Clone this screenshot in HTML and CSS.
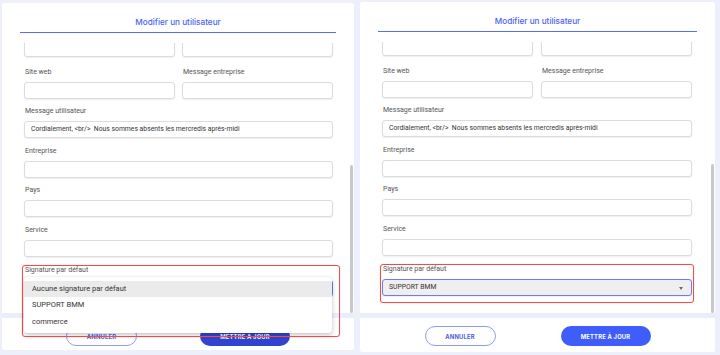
FILE: index.html
```html
<!DOCTYPE html>
<html lang="fr">
<head>
<meta charset="utf-8">
<title>Modifier un utilisateur</title>
<link rel="stylesheet" href="styles.css">
</head>
<body>
<div class="page">
  <section class="panel panel-left">
    <header class="panel-head"><div class="head-inner"><h2 class="title">Modifier un utilisateur</h2></div></header>
    <div class="panel-body">
      <div class="form">
        <div class="row two first">
          <div class="field"><div class="input"></div></div>
          <div class="field"><div class="input"></div></div>
        </div>
        <div class="row two">
          <div class="field"><label class="label">Site web</label><div class="input"></div></div>
          <div class="field"><label class="label">Message entreprise</label><div class="input"></div></div>
        </div>
        <div class="field"><label class="label">Message utilisateur</label><div class="input">Cordialement, &lt;br/&gt;&nbsp; Nous sommes absents les mercredis après-midi</div></div>
        <div class="field"><label class="label">Entreprise</label><div class="input"></div></div>
        <div class="field"><label class="label">Pays</label><div class="input"></div></div>
        <div class="field"><label class="label">Service</label><div class="input"></div></div>
        <div class="field sig">
          <label class="label">Signature par défaut</label>
          <div class="input select focused"></div>
          <ul class="menu">
            <li class="option active">Aucune signature par défaut</li>
            <li class="option">SUPPORT BMM</li>
            <li class="option">commerce</li>
          </ul>
          <span class="highlight hl-left"></span>
        </div>
      </div>
      <div class="scrollbar"></div>
    </div>
    <footer class="panel-foot foot-left">
      <button class="btn btn-outline">ANNULER</button>
      <button class="btn btn-primary dark">METTRE À JOUR</button>
    </footer>
  </section>

  <section class="panel panel-right">
    <header class="panel-head"><div class="head-inner"><h2 class="title">Modifier un utilisateur</h2></div></header>
    <div class="panel-body">
      <div class="form">
        <div class="row two first">
          <div class="field"><div class="input"></div></div>
          <div class="field"><div class="input"></div></div>
        </div>
        <div class="row two">
          <div class="field"><label class="label">Site web</label><div class="input"></div></div>
          <div class="field"><label class="label">Message entreprise</label><div class="input"></div></div>
        </div>
        <div class="field"><label class="label">Message utilisateur</label><div class="input">Cordialement, &lt;br/&gt;&nbsp; Nous sommes absents les mercredis après-midi</div></div>
        <div class="field"><label class="label">Entreprise</label><div class="input"></div></div>
        <div class="field"><label class="label">Pays</label><div class="input"></div></div>
        <div class="field"><label class="label">Service</label><div class="input"></div></div>
        <div class="field sig">
          <label class="label">Signature par défaut</label>
          <div class="input select focused filled">SUPPORT BMM<span class="caret"></span></div>
          <span class="highlight hl-right"></span>
        </div>
      </div>
      <div class="scrollbar"></div>
    </div>
    <footer class="panel-foot foot-right">
      <button class="btn btn-outline">ANNULER</button>
      <button class="btn btn-primary">METTRE À JOUR</button>
    </footer>
  </section>
</div>
</body>
</html>
```

FILE: styles.css
```css
* { box-sizing: border-box; margin: 0; padding: 0; }

html, body {
  width: 720px;
  height: 355px;
  overflow: hidden;
}

body {
  background: #edf0fb;
  font-family: Roboto, "Liberation Sans", sans-serif;
  color: #333;
}

.page {
  display: flex;
  align-items: flex-start;
  gap: 6px;
  padding-left: 2px;
}

.panel {
  background: #fff;
  border-radius: 3px;
  display: flex;
  flex-direction: column;
  position: relative;
}

.panel-left { width: 352px; height: 347px; margin-top: 3px; }
.panel-right { width: 355px; height: 350px; margin-top: 2px; }

.panel-head {
  position: relative;
  z-index: 4;
  background: #fff;
  border-radius: 3px 3px 0 0;
  padding: 12px 18px 10px;
}

.head-inner {
  border-bottom: 1.5px solid #5a6cf8;
  padding-bottom: 3px;
}

.title {
  font-family: Inter, "Noto Sans", sans-serif;
  font-weight: 500;
  font-size: 8.2px;
  line-height: 14px;
  text-align: center;
  color: #4d5ff2;
}

.panel-body {
  flex: 1;
  position: relative;
  z-index: 3;
}

.form {
  display: flex;
  flex-direction: column;
  gap: 7.6px;
  padding: 0 22px;
  margin-top: -3px;
}

.row.first { margin-bottom: 2px; }

.panel-left .form { padding-right: 21px; }
.panel-right .form { padding-right: 23px; }

.row.two {
  display: grid;
  grid-template-columns: 1fr 1fr;
  gap: 7px;
}
.panel-right .row.two { gap: 8px; }

.field {
  display: flex;
  flex-direction: column;
  position: relative;
}

.label {
  font-size: 7px;
  line-height: 10px;
  color: #555;
  margin-bottom: 5px;
  padding-left: 1px;
}

.input {
  height: 17px;
  border: 1px solid #dcdcdc;
  border-radius: 3px;
  box-shadow: 0 1px 1.5px rgba(0, 0, 0, 0.07);
  background: #fff;
  font-size: 6.8px;
  line-height: 15px;
  padding-left: 6px;
  color: #333;
  white-space: nowrap;
}

.select.focused {
  border-color: #6b7cf6;
  background: #efefef;
  position: relative;
}

.caret {
  position: absolute;
  right: 8px;
  top: 7px;
  width: 0;
  height: 0;
  border-left: 2.5px solid transparent;
  border-right: 2.5px solid transparent;
  border-top: 3px solid #6b6b6b;
}

.highlight {
  position: absolute;
  top: 0;
  border: 1.5px solid #ef4b4b;
  border-radius: 3px;
  pointer-events: none;
  box-shadow: 0 0 1px rgba(239, 75, 75, 0.5);
}

.hl-right { left: -2px; right: -2px; bottom: -7px; }
.hl-left { left: -2px; right: -7px; bottom: -40px; z-index: 6; }

.menu {
  list-style: none;
  position: absolute;
  z-index: 5;
  left: 0;
  right: 1px;
  top: 12px;
  background: #fff;
  border-radius: 3px;
  box-shadow: 0 2px 5px rgba(0, 0, 0, 0.22), 0 0 1px rgba(0, 0, 0, 0.15);
  padding: 4px 0 3px;
}

.option {
  height: 16.5px;
  line-height: 16.5px;
  font-size: 7.5px;
  padding-left: 8px;
  color: #333;
}

.option.active { background: #ebebeb; }

.scrollbar {
  position: absolute;
  right: 1px;
  top: 122px;
  bottom: 0;
  width: 3px;
  border-radius: 2px;
  background: #c8c8c8;
}

.panel-foot {
  border-top: 5px solid #eaedfb;
  display: flex;
  justify-content: center;
  align-items: flex-start;
  padding-top: 8px;
  position: relative;
  z-index: 2;
  background: #fff;
  border-radius: 0 0 3px 3px;
}

.foot-left { height: 37px; gap: 63px; }
.foot-right { height: 39px; gap: 65px; }

.btn {
  height: 20px;
  border-radius: 10px;
  font-family: Inter, "Noto Sans", sans-serif;
  font-weight: 700;
  font-size: 5.8px;
  letter-spacing: 0.2px;
}

.btn-outline {
  width: 71px;
  border: 1px solid #8d9cfb;
  background: #fff;
  color: #4a5de6;
}

.btn-primary {
  width: 90px;
  border: none;
  background: #3f5dfa;
  color: #fff;
}

.btn-primary.dark { background: #3044d2; }
```
